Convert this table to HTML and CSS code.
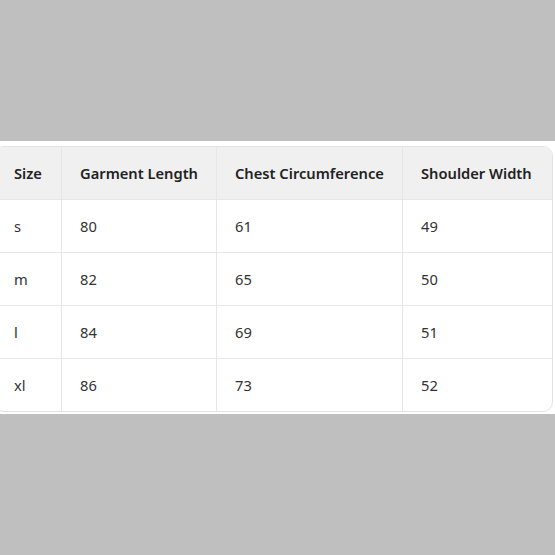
FILE: index.html
```html
<!DOCTYPE html>
<html>
<head>
<meta charset="utf-8">
<link rel="stylesheet" href="styles.css">
</head>
<body>
<div class="card">
  <table class="size-table">
    <thead>
      <tr><th>Size</th><th>Garment Length</th><th>Chest Circumference</th><th>Shoulder Width</th></tr>
    </thead>
    <tbody>
      <tr><td>s</td><td>80</td><td>61</td><td>49</td></tr>
      <tr><td>m</td><td>82</td><td>65</td><td>50</td></tr>
      <tr><td>l</td><td>84</td><td>69</td><td>51</td></tr>
      <tr><td>xl</td><td>86</td><td>73</td><td>52</td></tr>
    </tbody>
  </table>
</div>
</body>
</html>
```
FILE: styles.css
```css
html, body {
  margin: 0;
  padding: 0;
  background: #bfbfbf;
}
body {
  padding-top: 141px;
  font-family: "Noto Sans", "Open Sans", sans-serif;
}
.card {
  background: #ffffff;
  padding: 5px 2px 2px 0;
}
.size-table {
  margin-left: -6px;
  width: 559px;
  table-layout: fixed;
  border-collapse: separate;
  border-spacing: 0;
  border: 1px solid #e3e3e3;
  border-radius: 10px;
  overflow: hidden;
  font-size: 14.7px;
  color: #333;
}
.size-table th:nth-child(1) { width: 47px; }
.size-table th:nth-child(2) { width: 136px; }
.size-table th:nth-child(3) { width: 167px; }
.size-table th, .size-table td {
  text-align: left;
  padding: 0 0 0 18px;
  border-right: 1px solid #e6e6e6;
  border-bottom: 1px solid #e6e6e6;
  white-space: nowrap;
}
.size-table th:first-child, .size-table td:first-child {
  padding-left: 19px;
}
.size-table th:last-child, .size-table td:last-child { border-right: none; }
.size-table tbody tr:last-child td { border-bottom: none; }
.size-table th {
  background: #f0f0f0;
  font-weight: 600;
  color: #222;
  height: 52px;
}
.size-table td {
  height: 52px;
  font-weight: 400;
}
```
